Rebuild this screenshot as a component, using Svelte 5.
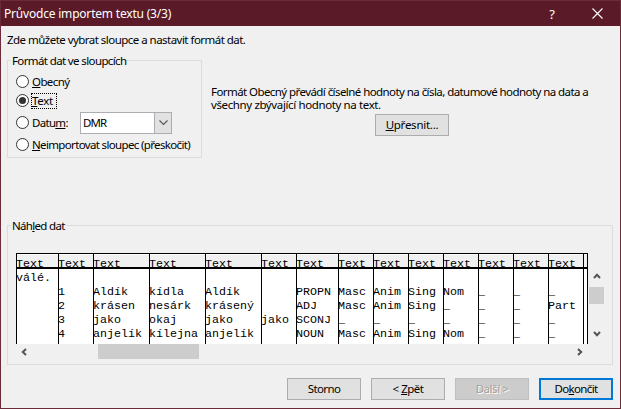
<script>
  let format = $state('text');
  const columns = [
    { w: 42, cells: ['válé.', '', '', '', ''] },
    { w: 35, cells: ['', '1', '2', '3', '4'] },
    { w: 56, cells: ['', 'Aldík', 'krásen', 'jako', 'anjelík'] },
    { w: 56, cells: ['', 'kídla', 'nesárk', 'okaj', 'kílejna'] },
    { w: 56, cells: ['', 'Aldík', 'krásený', 'jako', 'anjelík'] },
    { w: 35, cells: ['', '', '', 'jako', ''] },
    { w: 42, cells: ['', 'PROPN', 'ADJ', 'SCONJ', 'NOUN'] },
    { w: 35, cells: ['', 'Masc', 'Masc', '_', 'Masc'] },
    { w: 35, cells: ['', 'Anim', 'Anim', '_', 'Anim'] },
    { w: 35, cells: ['', 'Sing', 'Sing', '_', 'Sing'] },
    { w: 35, cells: ['', 'Nom', '_', '_', 'Nom'] },
    { w: 35, cells: ['', '_', '_', '_', '_'] },
    { w: 35, cells: ['', '_', '_', '_', '_'] },
    { w: 35, cells: ['', '_', 'Part', '_', '_'] }
  ];
</script>

{#snippet radio(value)}
  <svg class="radio" width="13" height="13" viewBox="0 0 13 13">
    <circle cx="6.5" cy="6.5" r="6" fill="#fff" stroke="#333" />
    {#if format === value}<circle cx="6.5" cy="6.5" r="3.5" fill="#333" />{/if}
  </svg>
{/snippet}

<div class="window">
  <header>
    <span class="title">Průvodce importem textu (3/3)</span>
    <span class="help">?</span>
    <svg width="11" height="11" viewBox="0 0 11 11"><path d="M.5.5l10 10M10.5.5l-10 10" stroke="#fff" stroke-width="1.1" /></svg>
  </header>

  <main>
    <p class="intro">Zde můžete vybrat sloupce a nastavit formát dat.</p>

    <div class="top">
      <section class="group format">
        <h2 class="l1">Formát dat ve sloupcích</h2>
        <div class="options">
          <label onclick={() => (format = 'general')}>{@render radio('general')}<span class="o1"><u>O</u>becný</span></label>
          <label onclick={() => (format = 'text')}>{@render radio('text')}<span class="focus"><u>T</u>ext</span></label>
          <div class="row">
            <label class="date" onclick={() => (format = 'date')}>{@render radio('date')}<span class="o3">Datu<u>m</u>:</span></label>
            <div class="combo">
              <span>DMR</span>
              <i><svg width="9" height="6" viewBox="0 0 9 6"><path d="M.5.5l4 4 4-4" fill="none" stroke="#555" stroke-width="1.1" /></svg></i>
            </div>
          </div>
          <label onclick={() => (format = 'skip')}>{@render radio('skip')}<span class="o4"><u>N</u>eimportovat sloupec (přeskočit)</span></label>
        </div>
      </section>

      <div class="info">
        <p class="i1">Formát Obecný převádí číselné hodnoty na čísla, datumové hodnoty na data a</p>
        <p class="i2">všechny zbývající hodnoty na text.</p>
        <button class="advanced"><span><u>U</u>přesnit...</span></button>
      </div>
    </div>

    <section class="group preview">
      <h2 class="l2">Náh<u>l</u>ed dat</h2>
      <div class="view">
        <div class="table">
          {#each columns as col}
            <div class="col" style:width="{col.w}px">
              <div class="head">Text</div>
              {#each col.cells as cell}<div class="cell">{cell}</div>{/each}
            </div>
          {/each}
          <div class="col end"><div class="head"></div></div>
        </div>
        <div class="vscroll">
          <svg width="8" height="6" viewBox="0 0 8 6"><path d="M1 5l3-3.2L7 5" fill="none" stroke="#555" stroke-width="2" /></svg>
          <div class="vthumb"></div>
          <svg class="down" width="8" height="6" viewBox="0 0 8 6"><path d="M1 1l3 3.2L7 1" fill="none" stroke="#555" stroke-width="2" /></svg>
        </div>
      </div>
      <div class="hscroll">
        <svg width="6" height="8" viewBox="0 0 6 8"><path d="M5 1L1.8 4 5 7" fill="none" stroke="#555" stroke-width="2" /></svg>
        <div class="hthumb"></div>
        <svg class="right" width="6" height="8" viewBox="0 0 6 8"><path d="M1 1l3.2 3L1 7" fill="none" stroke="#555" stroke-width="2" /></svg>
      </div>
    </section>

    <footer>
      <button><span class="b1">Storno</span></button>
      <button><span class="b2">&lt; <u>Z</u>pět</span></button>
      <button class="disabled" disabled><span class="b3">Další &gt;</span></button>
      <button class="default"><span class="b4">Do<u>k</u>ončit</span></button>
    </footer>
  </main>
</div>

<style>
  :global(body) { margin: 0; }
  .window, .window * { box-sizing: border-box; }
  .window {
    width: 621px; height: 409px; overflow: hidden;
    border: 1px solid #6b2b38; background: #f0f0f0; color: #000;
    font: 11.5px/14px "Noto Sans", "Open Sans", sans-serif;
    white-space: nowrap;
  }
  p, h2 { margin: 0; font: inherit; }
  u { text-decoration: underline; text-decoration-thickness: 1px; text-underline-offset: 1px; text-decoration-skip-ink: none; }
  svg { display: block; flex: none; }
  header { height: 25px; background: #5a1a28; color: #fff; display: flex; align-items: center; padding: 0 17px 0 3px; font-size: 12px; }
  .title { flex: 1; letter-spacing: -0.2px; }
  .help { margin-right: 37px; font-size: 13px; }
  main { padding: 7px 7px 0 6px; }
  .intro { height: 14px; letter-spacing: -0.53px; }
  .top { display: flex; margin-top: 13px; }
  .group { border: 1px solid #dcdcdc; }
  h2 { width: max-content; margin: -7px 0 0 3px; padding: 0 1px; height: 14px; background: #f0f0f0; }
  .l1 { letter-spacing: -0.62px; }
  .l2 { letter-spacing: -0.68px; }
  .o1 { letter-spacing: -0.6px; }
  .o3 { letter-spacing: -0.7px; }
  .o4 { letter-spacing: -0.65px; }
  .i1 { letter-spacing: -0.57px; }
  .i2 { letter-spacing: -0.38px; }
  .b1 { letter-spacing: -0.6px; }
  .b2 { letter-spacing: -0.5px; }
  .b3 { letter-spacing: -0.45px; }
  .b4 { letter-spacing: -0.65px; }
  .format { width: 195px; height: 98px; }
  .options { padding: 4px 0 0 8px; }
  label { display: flex; align-items: center; height: 19px; }
  .radio { margin-right: 3px; }
  .focus { border: 1px dotted #000; height: 16px; line-height: 14px; width: 26px; padding-left: 0; margin-left: -1px; letter-spacing: -0.3px; }
  .row { display: flex; align-items: center; height: 25px; }
  .date { width: 64px; }
  .combo { width: 92px; height: 22px; border: 1px solid #abadb3; background: #fff; display: flex; align-items: center; }
  .combo span { flex: 1; padding-left: 2px; letter-spacing: -0.9px; }
  .combo i { width: 18px; height: 22px; margin-right: -1px; border: 1px solid #abadb3; background: #e1e1e1; display: flex; align-items: center; justify-content: center; }
  .info { margin: 25px 0 0 9px; width: 400px; }
  .info p { height: 13px; line-height: 13px; }
  button { width: 74px; height: 22px; padding: 0; border: 1px solid #adadad; background: #e1e1e1; font: inherit; color: #000; display: flex; align-items: center; justify-content: center; }
  .advanced { margin: 3px 0 0 164px; letter-spacing: -0.25px; }
  .preview { height: 140px; margin-top: 67px; }
  .view { display: flex; margin: 20px 0 0 8px; }
  .table {
    display: flex; width: 572px; height: 91px; border-top: 1px solid #000; background: #fff;
    font-family: "Liberation Mono", monospace; font-size: 11.667px; text-indent: -1px;
  }
  .col { border-left: 1px solid #000; height: 90px; flex: none; }
  .head { height: 15px; border-top: 1px solid #fff; border-bottom: 2px solid #000; background: #f0f0f0; line-height: 19px; }
  .cell { height: 14px; line-height: 18px; }
  .end { width: 5px; border-right: 1px solid #000; }
  .vscroll { width: 15px; margin: 20px 0 0 1px; height: 71px; display: flex; flex-direction: column; align-items: center; }
  .vthumb { width: 15px; height: 17px; background: #cdcdcd; margin-top: 8px; }
  .down { margin-top: 27px; }
  .hscroll { display: flex; align-items: center; height: 15px; margin-left: 13px; }
  .hthumb { width: 101px; height: 15px; margin-left: 71px; background: #cdcdcd; }
  .right { margin-left: 378px; }
  footer { display: flex; gap: 10px; justify-content: flex-end; margin-top: 13px; }
  .disabled { background: #ccc; border-color: #bfbfbf; color: #a0a0a0; text-shadow: 1px 1px #fff; }
  .default { border: 2px solid #0078d7; }
</style>
